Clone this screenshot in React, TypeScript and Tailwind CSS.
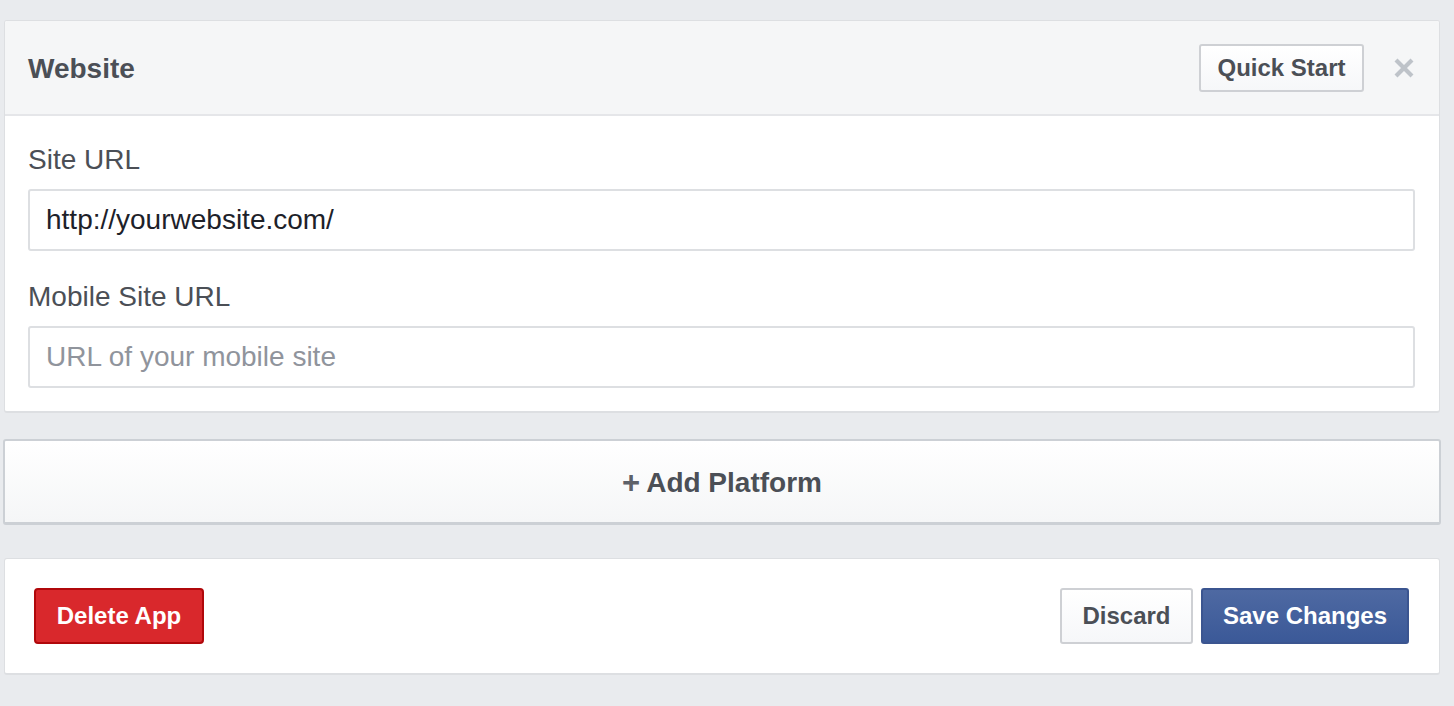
import { useState } from "react";

const font = { fontFamily: '"Liberation Sans", Arial, Helvetica, sans-serif' };

function CloseIcon() {
  return (
    <svg width="20" height="20" viewBox="0 0 20 20" className="block">
      <path d="M2 2 L18 18 M18 2 L2 18" stroke="#bec3c9" strokeWidth="4.2" strokeLinecap="butt" />
    </svg>
  );
}

function Field({
  label,
  value,
  placeholder,
  onChange,
}: {
  label: string;
  value: string;
  placeholder?: string;
  onChange: (v: string) => void;
}) {
  return (
    <div>
      <label className="block text-[28px] leading-[32px] text-[#4b4f56]">{label}</label>
      <input
        value={value}
        placeholder={placeholder}
        onChange={(e) => onChange(e.target.value)}
        className="mt-[13px] block h-[62px] w-full rounded-[3px] border-2 border-[#dddfe2] bg-white px-[16px] text-[28px] text-[#1d2129] outline-none placeholder:text-[#90949c]"
        style={font}
      />
    </div>
  );
}

export default function App() {
  const [siteUrl, setSiteUrl] = useState("http://yourwebsite.com/");
  const [mobileUrl, setMobileUrl] = useState("");

  return (
    <div className="min-h-screen w-full bg-[#e9ebee] pt-[20px]" style={font}>
      {/* Platform card */}
      <div className="ml-[4px] w-[1436px] overflow-hidden rounded-[3px] border border-b-2 border-[#dddfe2] bg-white">
        <div className="flex h-[95px] items-center justify-between border-b-2 border-[#e5e6e9] bg-[#f5f6f7] pl-[23px] pr-[25px]">
          <h2 className="mt-[3px] text-[28px] font-bold leading-none text-[#4b4f56]">Website</h2>
          <div className="flex items-center gap-[30px]">
            <button className="mt-[1px] h-[48px] w-[165px] rounded-[3px] border-2 border-[#ced0d4] bg-gradient-to-b from-white to-[#f6f7f9] text-[24px] font-bold text-[#4b4f56]">
              Quick Start
            </button>
            <button className="mt-[1px]">
              <CloseIcon />
            </button>
          </div>
        </div>
        <div className="flex flex-col gap-[30px] pb-[23px] pl-[23px] pr-[24px] pt-[28px]">
          <Field label="Site URL" value={siteUrl} onChange={setSiteUrl} />
          <Field
            label="Mobile Site URL"
            value={mobileUrl}
            placeholder="URL of your mobile site"
            onChange={setMobileUrl}
          />
        </div>
      </div>

      {/* Add platform */}
      <button className="ml-[3px] mt-[26px] flex h-[86px] w-[1438px] items-center justify-center rounded-[3px] border-2 border-b-[3px] border-[#ccd0d5] bg-gradient-to-b from-white to-[#f5f6f7] pt-[2px] text-[28px] font-bold text-[#4b4f56]">
        <span className="mr-[6px] text-[31px] leading-none text-[#5d6169]">+</span>Add Platform
      </button>

      {/* Footer actions */}
      <div className="ml-[4px] mt-[33px] flex h-[117px] w-[1436px] items-start justify-between rounded-[3px] border border-b-2 border-[#dddfe2] bg-white pl-[29px] pr-[30px] pt-[29px]">
        <button className="h-[56px] w-[170px] rounded-[4px] border-2 border-[#b0080b] bg-[#d9282c] text-[24px] font-bold text-white">
          Delete App
        </button>
        <div className="flex gap-[8px]">
          <button className="h-[56px] w-[133px] rounded-[3px] border-2 border-[#ced0d4] bg-gradient-to-b from-white to-[#f6f7f9] text-[24px] font-bold text-[#4b4f56]">
            Discard
          </button>
          <button className="h-[56px] w-[208px] rounded-[3px] border-2 border-[#3b5590] bg-gradient-to-b from-[#4e69a2] to-[#3b5998] text-[24px] font-bold text-white">
            Save Changes
          </button>
        </div>
      </div>
    </div>
  );
}
